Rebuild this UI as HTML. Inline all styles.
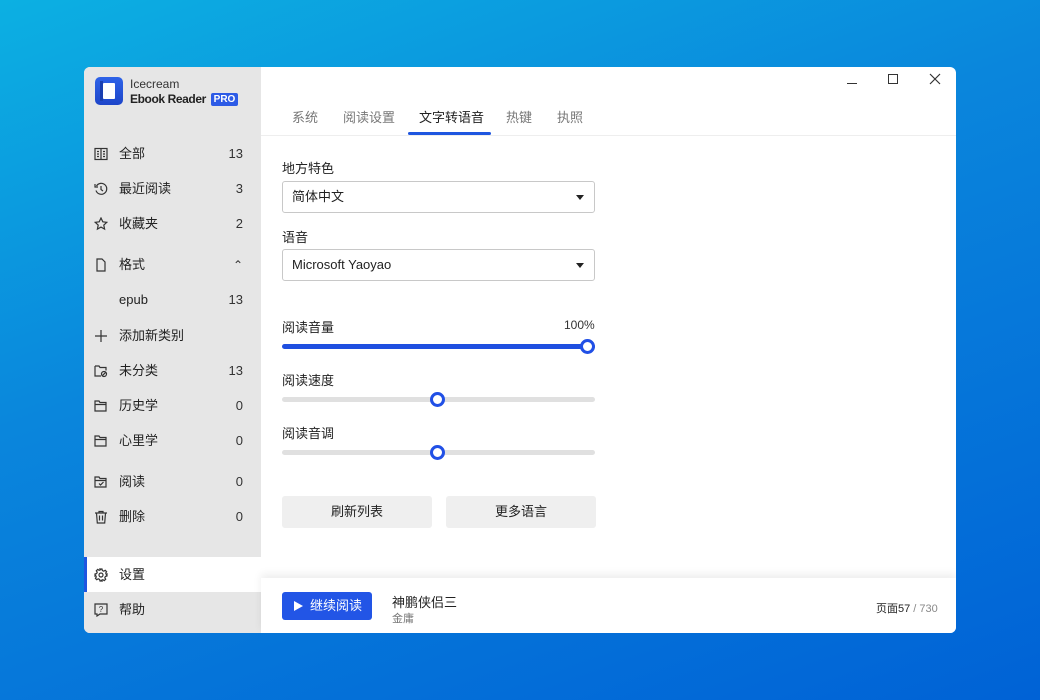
<!DOCTYPE html>
<html><head><meta charset="utf-8"><style>
*{margin:0;padding:0;box-sizing:border-box}
body{width:1040px;height:700px;overflow:hidden;background:linear-gradient(160deg,#0cb0e2 0%,#0a86dc 40%,#0062d6 100%);font-family:"Liberation Sans","Noto Sans CJK SC",sans-serif;color:#222;position:relative}
.win{position:absolute;left:84px;top:67px;width:872px;height:566px;background:#fff;border-radius:6px;overflow:hidden}
.side{position:absolute;left:0;top:0;width:177px;height:566px;background:#e6e6e6}
.a{position:absolute}
.item{position:absolute;left:0;width:177px;height:36px;font-size:13px;line-height:36px}
.item .t{position:absolute;left:35px}
.item .n{position:absolute;right:18px;font-size:13px;color:#333}
.item svg{position:absolute;left:10px;top:11px}
.tab{position:absolute;top:40px;font-size:13px;color:#777}
.lbl{position:absolute;left:198px;font-size:13px;color:#222}
.sel{position:absolute;left:198px;width:313px;height:32px;border:1px solid #c8c8c8;border-radius:3px;font-size:13px;line-height:30px;padding-left:9px}
.sel:after{content:"";position:absolute;right:10px;top:13px;border-left:4px solid transparent;border-right:4px solid transparent;border-top:5px solid #222}
.track{position:absolute;left:198px;width:313px;height:5px;border-radius:3px;background:#e0e0e0}
.knob{position:absolute;width:15px;height:15px;border-radius:50%;border:3px solid #2150e6;background:#fff}
.btn{position:absolute;top:429px;width:150px;height:32px;background:#efefef;border-radius:3px;font-size:13px;text-align:center;line-height:32px}
</style></head><body>
<div class="win">
 <div class="side">
  <div class="a" style="left:11px;top:10px;width:28px;height:28px;border-radius:5px;background:linear-gradient(#2e63e8,#1d45c9)"><div class="a" style="left:8px;top:6px;width:12px;height:16px;background:#fff;border-radius:1px"></div><div class="a" style="left:5px;top:4px;width:3px;height:20px;background:#1a3fb0"></div></div>
  <div class="a" style="left:46px;top:10px;font-size:12px;color:#333">Icecream</div>
  <div class="a" style="left:46px;top:25px;font-size:12px;font-weight:bold;color:#222;letter-spacing:-0.4px">Ebook Reader</div>
  <div class="a" style="left:127px;top:26px;width:27px;height:13px;background:#2d5be6;color:#fff;font-size:10px;font-weight:bold;line-height:13px;text-align:center;border-radius:2px">PRO</div>

  <div class="item" style="top:69px"><svg width="14" height="14" viewBox="0 0 14 14" fill="none" stroke="#333" stroke-width="1.2"><rect x="1" y="1.5" width="12" height="11"/><path d="M7 1.5v11M3 4.5h2M3 7h2M3 9.5h2M9 4.5h2M9 7h2M9 9.5h2"/></svg><span class="t">全部</span><span class="n">13</span></div>
  <div class="item" style="top:104px"><svg width="14" height="14" viewBox="0 0 14 14" fill="none" stroke="#333" stroke-width="1.2"><path d="M2.5 4A5.5 5.5 0 1 1 2 8.5"/><path d="M1 2v3h3"/><path d="M7 4v3.5l2 1.5"/></svg><span class="t">最近阅读</span><span class="n">3</span></div>
  <div class="item" style="top:139px"><svg width="14" height="14" viewBox="0 0 14 14" fill="none" stroke="#333" stroke-width="1.2"><path d="M7 1l1.8 3.8 4 .5-3 2.8.8 4L7 10.1 3.4 12.1l.8-4-3-2.8 4-.5z"/></svg><span class="t">收藏夹</span><span class="n">2</span></div>
  <div class="item" style="top:180px"><svg width="14" height="14" viewBox="0 0 14 14" fill="none" stroke="#333" stroke-width="1.2"><path d="M3 1h5l3 3v9H3z"/></svg><span class="t">格式</span><span class="n" style="font-size:12px">&#8963;</span></div>
  <div class="item" style="top:215px"><span class="t">epub</span><span class="n">13</span></div>
  <div class="item" style="top:251px"><svg width="14" height="14" viewBox="0 0 14 14" fill="none" stroke="#333" stroke-width="1.2"><path d="M7 1v12M1 7h12"/></svg><span class="t">添加新类别</span></div>
  <div class="item" style="top:286px"><svg width="14" height="14" viewBox="0 0 14 14" fill="none" stroke="#333" stroke-width="1.2"><path d="M1 2h4l1 1.5h6v3M1 2v10h6"/><circle cx="10" cy="10" r="2.5"/><path d="M8.3 11.7l3.4-3.4"/></svg><span class="t">未分类</span><span class="n">13</span></div>
  <div class="item" style="top:321px"><svg width="14" height="14" viewBox="0 0 14 14" fill="none" stroke="#333" stroke-width="1.2"><path d="M1 2h4l1 1.5h6v8.5H1z M1 5.5h11"/></svg><span class="t">历史学</span><span class="n">0</span></div>
  <div class="item" style="top:356px"><svg width="14" height="14" viewBox="0 0 14 14" fill="none" stroke="#333" stroke-width="1.2"><path d="M1 2h4l1 1.5h6v8.5H1z M1 5.5h11"/></svg><span class="t">心里学</span><span class="n">0</span></div>
  <div class="item" style="top:397px"><svg width="14" height="14" viewBox="0 0 14 14" fill="none" stroke="#333" stroke-width="1.2"><path d="M1 2h4l1 1.5h6v8.5H1z M1 5.5h11"/><path d="M5 8.5l1.5 1.5 3-3"/></svg><span class="t">阅读</span><span class="n">0</span></div>
  <div class="item" style="top:432px"><svg width="14" height="14" viewBox="0 0 14 14" fill="none" stroke="#333" stroke-width="1.2"><path d="M1 3h12M5 3V1.5h4V3M2.5 3l.8 10h7.4l.8-10M5.5 5.5v5M8.5 5.5v5"/></svg><span class="t">删除</span><span class="n">0</span></div>
  <div class="item" style="top:490px;height:35px;background:#fff"><div class="a" style="left:0;top:0;width:3px;height:35px;background:#1f56e0"></div><svg width="14" height="14" viewBox="0 0 14 14" fill="none" stroke="#333" stroke-width="1.2"><circle cx="7" cy="7" r="2"/><path d="M6 1h2l.4 1.6 1.4.6 1.4-.9 1.4 1.4-.9 1.4.6 1.4L13 6v2l-1.6.4-.6 1.4.9 1.4-1.4 1.4-1.4-.9-1.4.6L8 13H6l-.4-1.6-1.4-.6-1.4.9-1.4-1.4.9-1.4-.6-1.4L1 8V6l1.6-.4.6-1.4-.9-1.4 1.4-1.4 1.4.9 1.4-.6z"/></svg><span class="t" style="line-height:35px">设置</span></div>
  <div class="item" style="top:525px"><svg width="14" height="14" viewBox="0 0 14 14" fill="none" stroke="#333" stroke-width="1.2"><path d="M1 1h12v10H6l-3 2v-2H1z"/><text x="7" y="9" font-size="8" text-anchor="middle" fill="#333" stroke="none" font-family="Liberation Sans">?</text></svg><span class="t">帮助</span></div>
 </div>

 <div class="a" style="left:763px;top:16px;width:10px;height:1px;background:#333"></div>
 <div class="a" style="left:804px;top:7px;width:10px;height:10px;border:1px solid #333"></div>
 <svg class="a" style="left:845px;top:6px" width="12" height="12" viewBox="0 0 12 12" stroke="#333" stroke-width="1.2"><path d="M1 1l10 10M11 1L1 11"/></svg>

 <div class="tab" style="left:208px">系统</div>
 <div class="tab" style="left:259px">阅读设置</div>
 <div class="tab" style="left:335px;color:#222">文字转语音</div>
 <div class="tab" style="left:422px">热键</div>
 <div class="tab" style="left:473px">执照</div>
 <div class="a" style="left:324px;top:65px;width:83px;height:3px;background:#1f56e0;border-radius:2px"></div>
 <div class="a" style="left:177px;top:68px;width:695px;height:1px;background:#eee"></div>

 <div class="lbl" style="top:91px">地方特色</div>
 <div class="sel" style="top:114px">简体中文</div>
 <div class="lbl" style="top:160px">语音</div>
 <div class="sel" style="top:182px">Microsoft Yaoyao</div>

 <div class="lbl" style="top:250px">阅读音量</div>
 <div class="a" style="left:480px;top:251px;font-size:12px;color:#333">100%</div>
 <div class="track" style="top:277px;background:#1f4fe0"></div>
 <div class="knob" style="left:496px;top:272px"></div>

 <div class="lbl" style="top:303px">阅读速度</div>
 <div class="track" style="top:330px"></div>
 <div class="knob" style="left:346px;top:325px"></div>

 <div class="lbl" style="top:356px">阅读音调</div>
 <div class="track" style="top:383px"></div>
 <div class="knob" style="left:346px;top:378px"></div>

 <div class="btn" style="left:198px">刷新列表</div>
 <div class="btn" style="left:362px">更多语言</div>

 <div class="a" style="left:177px;top:511px;width:695px;height:55px;background:#fff;box-shadow:0 -4px 8px rgba(0,0,0,0.07)"></div>
 <div class="a" style="left:198px;top:525px;width:90px;height:28px;background:#2255e6;border-radius:3px;color:#fff;font-size:13px;line-height:28px"><span class="a" style="left:12px;top:9px;border-top:5px solid transparent;border-bottom:5px solid transparent;border-left:9px solid #fff"></span><span class="a" style="left:28px">继续阅读</span></div>
 <div class="a" style="left:308px;top:525px;font-size:13px;color:#222">神鹏侠侣三</div>
 <div class="a" style="left:308px;top:543px;font-size:11px;color:#777">金庸</div>
 <div class="a" style="left:792px;top:533px;font-size:11px;color:#222">页面57 <span style="color:#888">/ 730</span></div>
</div>
</body></html>
